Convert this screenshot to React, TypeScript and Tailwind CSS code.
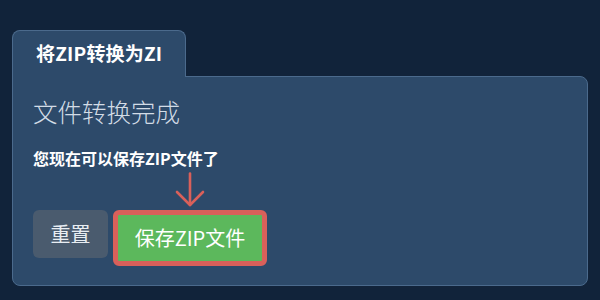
import React from 'react';

const font = { fontFamily: '"Noto Sans CJK SC", "Noto Sans", sans-serif' };

const DownArrow: React.FC = () => (
    <svg width="32" height="36" viewBox="0 0 32 36" fill="none" stroke="#d9605a" strokeWidth="2.6" strokeLinecap="round" strokeLinejoin="round">
        <path d="M16 1.5V33" />
        <path d="M3 20L16 33L29 20" />
    </svg>
);

const App: React.FC = () => {
    return (
        <div className="w-[600px] h-[300px] bg-[#11233a] pt-[30px] px-[12px] overflow-hidden" style={font}>
            <div className="flex">
                <div className="w-[174px] h-[47px] -mb-px relative z-10 bg-[#2d4a6a] border border-b-0 border-[#4b6a8c] rounded-t-lg flex items-center pl-[23px] pb-[2px]">
                    <span className="text-[19px] font-bold text-white tracking-[0.2px]">将ZIP转换为ZI</span>
                </div>
            </div>
            <div className="w-[576px] bg-[#2d4a6a] border border-[#4b6a8c] rounded-tr-lg rounded-b-lg px-[20px] pt-[17px] pb-[19px]">
                <h2 className="text-[24.5px] leading-[36px] text-[#d3dce6] font-light">文件转换完成</h2>
                <p className="mt-[16px] text-[16px] leading-[24px] font-bold text-white">您现在可以保存ZIP文件了</p>
                <div className="mt-[40px] flex items-start gap-[5px]">
                    <button className="w-[75px] h-[48px] rounded-md bg-[#4a5b6e] text-[#e8edf2] text-[20px]">重置</button>
                    <div className="relative">
                        <div className="absolute bottom-full left-1/2 -translate-x-1/2 mb-[2px]">
                            <DownArrow />
                        </div>
                        <button className="w-[154px] h-[56px] rounded-md border-[5px] border-[#d9605a] bg-[#5cb85c] text-white text-[20px]">保存ZIP文件</button>
                    </div>
                </div>
            </div>
        </div>
    );
};

export default App;
